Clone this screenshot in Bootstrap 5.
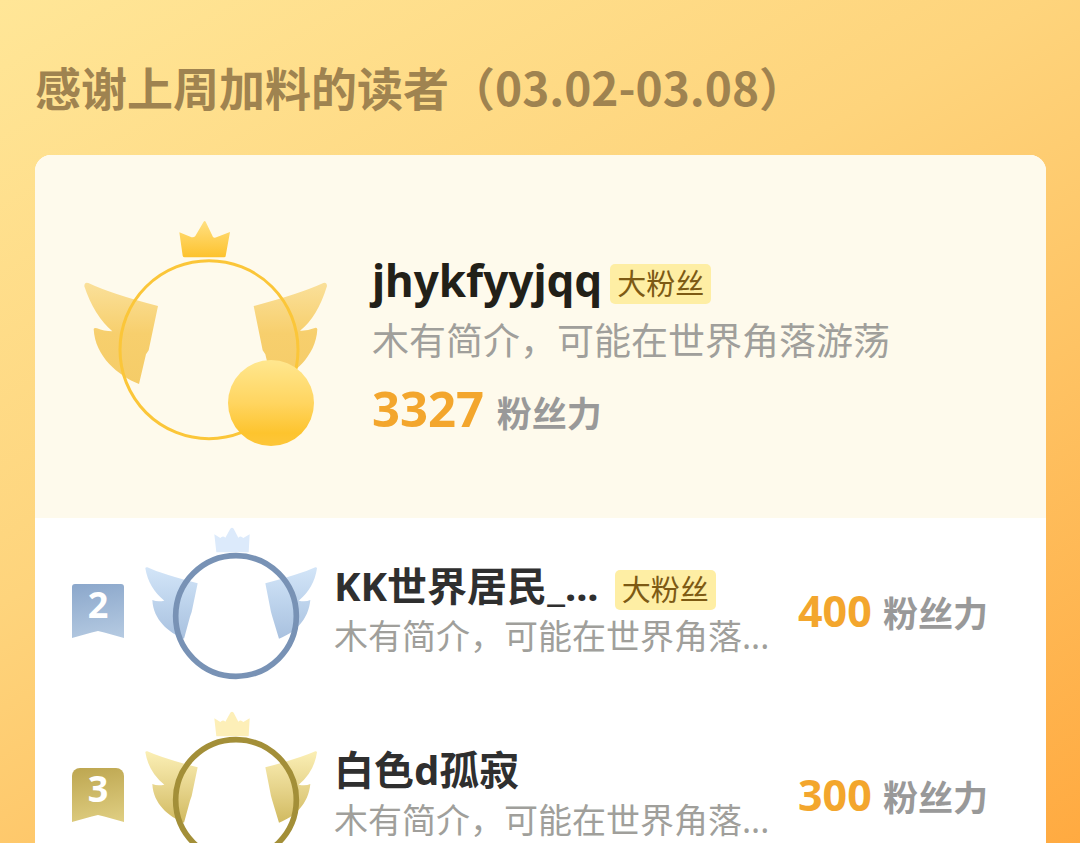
<!DOCTYPE html>
<html lang="zh-CN">
<head>
<meta charset="utf-8">
<meta name="viewport" content="width=device-width, initial-scale=1">
<title>感谢上周加料的读者</title>
<link href="https://cdn.jsdelivr.net/npm/bootstrap@5.3.0/dist/css/bootstrap.min.css" rel="stylesheet">
<style>
body { font-family: "Noto Sans", "Noto Sans CJK SC", sans-serif; background: #fdc364; }
.thanks { min-height: 100vh; padding: 54px 34px 0 35px; overflow: hidden;
  background: linear-gradient(150deg, #ffe697 0%, #fed47c 40%, #fec364 64%, #ffa83e 100%); }
.thanks-title { font: 700 46px/64px "Noto Sans CJK SC", sans-serif; color: #9f8350; margin: 0 0 37px; }
.board { border-radius: 16px 16px 0 0; overflow: hidden; background: #fff; }
.champion { background: #fefaec; padding: 65px 49px 66px; }
.champion-info { padding: 32px 0 0 44px; }
.fan-name { font-weight: 700; color: #2f2f2f; font-size: 40px; line-height: 56px; }
.champion .fan-name { font-size: 44px; color: #222018; }
.fan-tag { font-size: 29px; line-height: 40px; padding: 0 7px; border-radius: 5px; background: #feeea4; color: #7d5a14; }
.fan-bio { font-family: "Noto Sans CJK SC", sans-serif; font-size: 37px; line-height: 62px; color: #a09f9b; }
.contender .fan-bio { font-family: "Noto Sans", "Noto Sans CJK SC", sans-serif; font-size: 34px; line-height: 44px; }
.score { font-weight: 700; font-size: 43px; line-height: 56px; color: #f3a62d; white-space: nowrap; }
.champion .score { font-size: 49px; line-height: 76px; }
.score-unit { font-size: 35px; color: #999; }
.contender { height: 184px; padding: 8px 58px 0 37px; }
.rank { width: 52px; height: 54px; margin: 58px 20px 0 0; border-radius: 3px 3px 0 0; color: #fff;
  font-weight: 700; font-size: 36px; line-height: 42px; text-align: center;
  clip-path: polygon(0 0, 100% 0, 100% 100%, 62% 90%, 50% 87%, 38% 90%, 0 100%); }
.silver .rank { background: linear-gradient(170deg, #8ba7cb, #b6cbe2); }
.bronze .rank { background: linear-gradient(170deg, #bda650, #e0cf83); border-radius: 8px 8px 0 0; }
.silver { --wing: url(#silver-wing); --crown: #dceafb; --ring: #7892b5; }
.bronze { --wing: url(#bronze-wing); --crown: #fdefb8; --ring: #a38f38; }
.laurel { flex: none; }
.laurel-wing { fill: var(--wing); }
.laurel-crown { fill: var(--crown); }
.laurel-ring { fill: none; stroke: var(--ring); stroke-width: 17; }
.contender-info { padding: 32px 0 0 16px; }
.contender .score { padding-top: 57px; }
</style>
</head>
<body>
<svg width="0" height="0" class="position-absolute" aria-hidden="true">
  <defs>
    <linearGradient id="gold-wing" x1="0" y1="0" x2="0" y2="1"><stop offset="0" stop-color="#fae09a"/><stop offset=".5" stop-color="#f7cf6d"/><stop offset="1" stop-color="#f5cc68"/></linearGradient>
    <linearGradient id="gold-crown" x1="0" y1="0" x2="0" y2="1"><stop offset="0" stop-color="#ffe082"/><stop offset="1" stop-color="#fdc22d"/></linearGradient>
    <linearGradient id="gold-ball" x1="0" y1="0" x2="0" y2="1"><stop offset="0" stop-color="#ffe78f"/><stop offset=".5" stop-color="#ffd560"/><stop offset=".85" stop-color="#fdc42e"/><stop offset="1" stop-color="#fdc63a"/></linearGradient>
    <linearGradient id="silver-wing" x1="0" y1="0" x2="0" y2="1"><stop offset="0" stop-color="#d3e5f8"/><stop offset=".5" stop-color="#bdd3ec"/><stop offset="1" stop-color="#a9c1df"/></linearGradient>
    <linearGradient id="bronze-wing" x1="0" y1="0" x2="0" y2="1"><stop offset="0" stop-color="#fbefb5"/><stop offset=".5" stop-color="#e7d58d"/><stop offset="1" stop-color="#d1ba60"/></linearGradient>
  </defs>
  <symbol id="laurel" viewBox="252 18 522 465">
    <path class="laurel-crown" d="M463 43 L481 54 Q488 45 496 53 L511 26 Q516 21 521 26 L535 53 Q542 45 550 54 L569 43 L566 97 H469 Z"/>
    <path class="laurel-wing" d="M262 142 Q308 163 413 190 L395 276 L390 290 L372 356 C326 338 280 300 277 240 Q292 246 313 242 Q266 205 256 145 Q257 141 262 142 Z"/>
    <path class="laurel-wing" d="M766 142 Q719 163 616 190 L633 276 L637 290 L657 356 C705 338 745 300 751 240 Q737 246 716 242 Q762 205 771 145 Q770 141 766 142 Z"/>
    <circle class="laurel-ring" cx="528" cy="288" r="181"/>
  </symbol>
</svg>

<main class="thanks">
  <h1 class="thanks-title">感谢上周加料的读者（03.02-03.08）</h1>
  <section class="board">
    <article class="champion d-flex align-items-start">
      <svg class="laurel" width="244" height="228" viewBox="42 45 732 684" aria-hidden="true">
        <path fill="url(#gold-crown)" d="M328 82 L361 95 Q370 99 376 93 L401 50 Q404 46 407 50 L429 96 Q433 101 441 96 L480 81 L467 153 Q467 157 462 157 H344 Q339 157 338 152 Z"/>
        <path fill="url(#gold-wing)" d="M55 234 Q125 267 264 303 L236 436 L228 448 L207 537 C145 512 75 455 71 372 Q73 367 81 370 Q101 379 127 379 Q72 332 43 244 Q43 230 55 234 Z"/>
        <path fill="url(#gold-wing)" d="M760 234 Q688 267 551 303 L578 436 L586 448 L607 537 C668 512 738 455 742 373 Q740 366 732 370 Q713 378 690 377 Q742 337 771 243 Q770 231 760 234 Z"/>
        <circle cx="417" cy="434" r="267" fill="none" stroke="#fbc639" stroke-width="9"/>
        <circle cx="603" cy="594" r="129" fill="url(#gold-ball)"/>
      </svg>
      <div class="champion-info">
        <div class="d-flex align-items-end gap-2">
          <span class="fan-name">jhykfyyjqq</span>
          <span class="fan-tag mb-1">大粉丝</span>
        </div>
        <div class="fan-bio">木有简介，可能在世界角落游荡</div>
        <div class="score">3327 <span class="score-unit">粉丝力</span></div>
      </div>
    </article>
    <article class="contender silver d-flex align-items-start">
      <div class="rank">2</div>
      <svg class="laurel" width="174" height="155" aria-hidden="true"><use href="#laurel"/></svg>
      <div class="contender-info">
        <div class="d-flex align-items-end gap-3">
          <span class="fan-name">KK世界居民<span class="fw-normal">_</span>...</span>
          <span class="fan-tag mb-1">大粉丝</span>
        </div>
        <div class="fan-bio">木有简介，可能在世界角落...</div>
      </div>
      <div class="score ms-auto">400 <span class="score-unit">粉丝力</span></div>
    </article>
    <article class="contender bronze d-flex align-items-start">
      <div class="rank">3</div>
      <svg class="laurel" width="174" height="155" aria-hidden="true"><use href="#laurel"/></svg>
      <div class="contender-info">
        <div class="fan-name">白色d孤寂</div>
        <div class="fan-bio">木有简介，可能在世界角落...</div>
      </div>
      <div class="score ms-auto">300 <span class="score-unit">粉丝力</span></div>
    </article>
  </section>
</main>
<script src="https://cdn.jsdelivr.net/npm/bootstrap@5.3.0/dist/js/bootstrap.bundle.min.js"></script>
</body>
</html>
